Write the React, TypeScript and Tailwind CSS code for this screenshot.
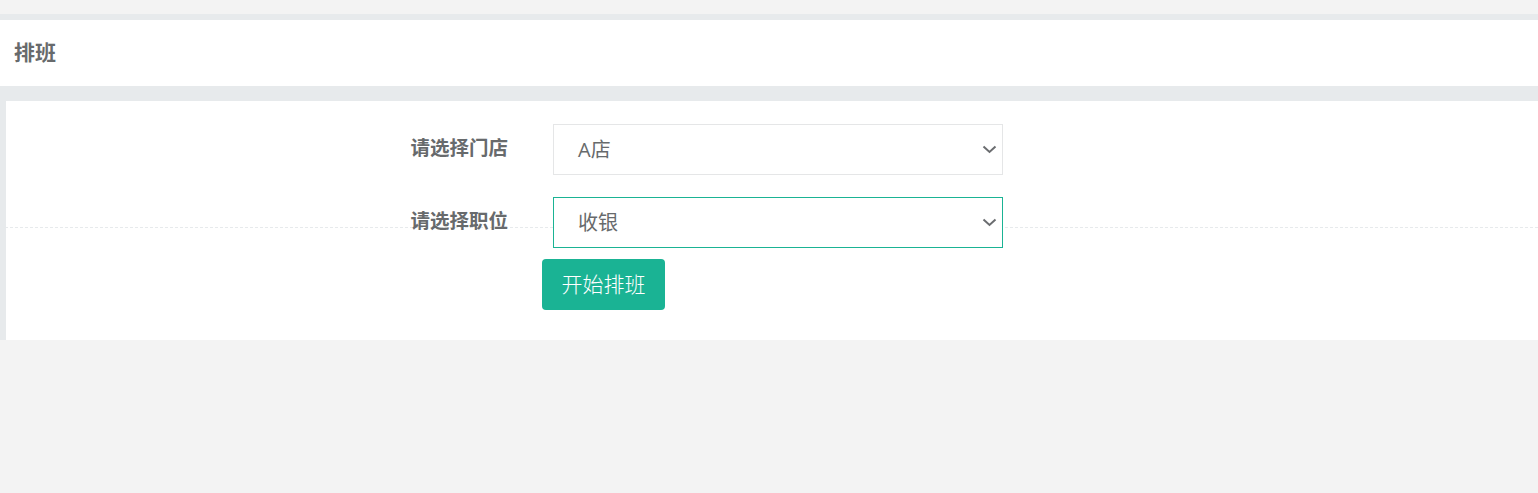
import * as React from "react";

const font = { fontFamily: '"Open Sans", "Noto Sans CJK SC", sans-serif' };

const Chevron: React.FC = () => (
  <svg width="15" height="9" viewBox="0 0 15 9" fill="none" className="shrink-0">
    <path d="M1.5 1.5 L7.5 7 L13.5 1.5" stroke="#6b6d70" strokeWidth="2" />
  </svg>
);

interface FieldProps {
  label: string;
  value: string;
  focused?: boolean;
}

const Field: React.FC<FieldProps> = ({ label, value, focused }) => (
  <div className="flex items-center">
    <label className="w-[502px] text-right text-[19.5px] font-bold text-[#676a6c] leading-[28px] pb-[4px] relative z-10">
      {label}
    </label>
    <div
      className={
        focused
          ? "ml-[45px] w-[450px] h-[51px] bg-white border border-[#1ab394] flex items-center justify-between pl-[24px] pr-[5px] relative z-10"
          : "ml-[45px] w-[450px] h-[51px] bg-white border border-[#e5e6e7] flex items-center justify-between pl-[24px] pr-[5px] relative z-10"
      }
    >
      <span className="text-[20px] text-[#676a6c]">{value}</span>
      <Chevron />
    </div>
  </div>
);

const App: React.FC = () => {
  return (
    <div className="w-screen h-screen bg-[#f3f3f3] pt-[14px]" style={font}>
      <div className="h-[6px] bg-[#e7eaec]"></div>
      <div className="h-[66px] bg-white flex items-center px-[14px]">
        <h5 className="text-[21px] font-bold text-[#676a6c]">排班</h5>
      </div>
      <div className="h-[15px] bg-[#e7eaec]"></div>
      <div className="relative bg-[#e7eaec] pl-[6px]">
        <div className="bg-white h-[239px] pt-[23px] flex flex-col">
          <Field label="请选择门店" value="A店" />
          <div className="mt-[22px]">
            <Field label="请选择职位" value="收银" focused />
          </div>
          <div className="mt-[11px] pl-[536px]">
            <button className="w-[123px] h-[51px] bg-[#1ab394] text-white text-[21px] font-light rounded-[4px]">
              开始排班
            </button>
          </div>
        </div>
        <div className="absolute left-0 right-0 top-[126px] border-t border-dashed border-[#e7eaec]"></div>
      </div>
    </div>
  );
};

export default App;
